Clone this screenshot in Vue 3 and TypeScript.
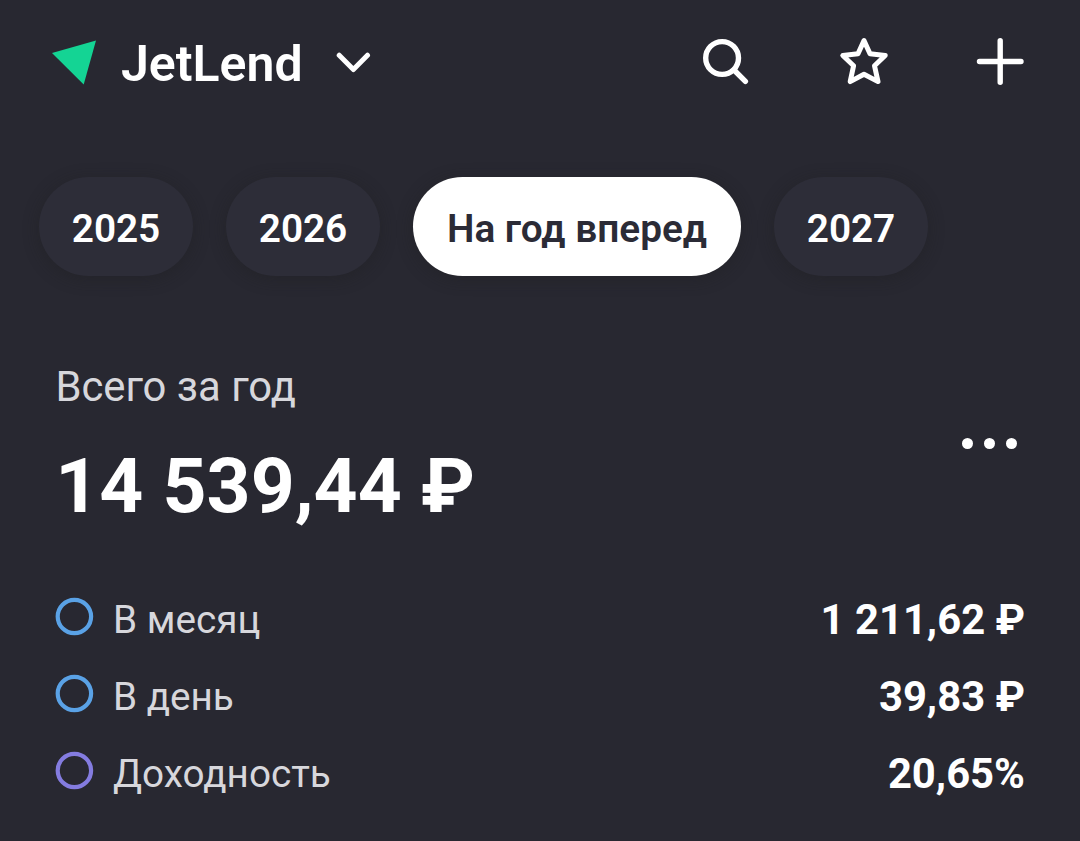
<script setup lang="ts">
interface Period {
  label: string
  active?: boolean
}

interface Metric {
  label: string
  value: string
  tone: 'blue' | 'violet'
}

const periods: Period[] = [
  { label: '2025' },
  { label: '2026' },
  { label: 'На год вперед', active: true },
  { label: '2027' },
]

const metrics: Metric[] = [
  { label: 'В месяц', value: '1 211,62 ₽', tone: 'blue' },
  { label: 'В день', value: '39,83 ₽', tone: 'blue' },
  { label: 'Доходность', value: '20,65%', tone: 'violet' },
]
</script>

<template>
  <main class="screen">
    <header class="topbar">
      <svg class="logo" viewBox="0 0 46 46"><path d="M2 14 46 1.5 33.7 45.5Z" /></svg>
      <h1 class="title">JetLend</h1>
      <svg class="icon chevron" viewBox="0 0 36 24"><path d="M4.2 5.2 18.4 19.5 32.5 5.2" /></svg>
      <nav class="actions">
        <svg class="icon" viewBox="0 0 50 50"><circle cx="22.1" cy="22" r="16.4" /><path d="M34 34 45.4 45.4" /></svg>
        <svg class="icon star" viewBox="0 0 50 50">
          <path d="M25 4.6 31 17.7 46.2 19.5 35.5 29.7 39 45.6 25 38.3 11.2 45.6 14.6 29.7 3.8 19.5 19 17.7Z" />
        </svg>
        <svg class="icon" viewBox="0 0 50 50"><path d="M25.2 4.7V46.3M4.5 25.5H46" /></svg>
      </nav>
    </header>

    <div class="periods">
      <button v-for="p in periods" :key="p.label" class="chip" :class="{ active: p.active }">
        <span>{{ p.label }}</span>
      </button>
    </div>

    <section class="summary">
      <div>
        <div class="caption">Всего за год</div>
        <div class="total">14 539,44 ₽</div>
      </div>
      <div class="more"><i /><i /><i /></div>
    </section>

    <ul class="metrics">
      <li v-for="m in metrics" :key="m.label" class="metric">
        <svg class="ring" :class="m.tone" viewBox="0 0 38 37"><circle cx="19.4" cy="18.5" r="16.7" /></svg>
        <span class="name">{{ m.label }}</span>
        <span class="value">{{ m.value }}</span>
      </li>
    </ul>
  </main>
</template>

<style>
body {
  margin: 0;
  background: #282831;
}
</style>

<style scoped>
.screen {
  box-sizing: border-box;
  width: 1080px;
  height: 841px;
  overflow: hidden;
  background: #282831;
  color: #fff;
  font-family: Roboto, "Noto Sans", sans-serif;
}
.topbar {
  display: flex;
  align-items: flex-start;
  height: 141px;
  padding: 36px 55px 0 50px;
}
.logo {
  width: 46px;
  height: 46px;
  margin-top: 3px;
  fill: #14d494;
}
.title {
  width: 182px;
  margin: 0 0 0 25px;
  font-size: 50px;
  line-height: 56px;
  font-weight: 600;
  white-space: nowrap;
}
.icon {
  width: 50px;
  height: 50px;
  fill: none;
  stroke: #fff;
  stroke-width: 5.4;
  stroke-linecap: round;
  stroke-linejoin: round;
}
.icon.chevron {
  width: 36px;
  height: 24px;
  margin: 14px 0 0 32px;
  stroke-width: 5;
}
.icon.star {
  stroke-width: 5;
}
.actions {
  display: flex;
  gap: 89px;
  margin-left: auto;
}
.actions .icon:nth-child(3) {
  margin-left: -3px;
}
.periods {
  display: flex;
  gap: 33px;
  padding-left: 39px;
}
.chip {
  box-sizing: border-box;
  flex: none;
  width: 154px;
  height: 99px;
  padding: 4px 0 0;
  border: 0;
  border-radius: 50px;
  background: #2d2d38;
  box-shadow: 0 3px 16px rgba(30, 30, 34, 0.45);
  color: #fff;
  font: 600 38.8px/46px Roboto, "Noto Sans", sans-serif;
  letter-spacing: -0.1px;
  white-space: nowrap;
}
.chip.active {
  width: 328px;
  background: #fff;
  color: #2b2b36;
  letter-spacing: 0;
}
.summary {
  display: flex;
  justify-content: space-between;
  padding: 86px 63px 0 55px;
}
.caption {
  height: 50px;
  margin-left: 0.4px;
  font-size: 41.8px;
  line-height: 50px;
  color: #d7d7dc;
}
.total {
  margin-top: 28px;
  margin-left: 0.3px;
  font-size: 76.8px;
  line-height: 92px;
  font-weight: 700;
}
.more {
  display: flex;
  gap: 11px;
  padding-top: 76px;
}
.more i {
  width: 11px;
  height: 11px;
  border-radius: 50%;
  background: #fff;
}
.metrics {
  margin: 49px 0 0;
  padding: 0 55px;
  list-style: none;
}
.metric {
  display: flex;
  align-items: center;
  height: 77px;
}
.ring {
  width: 38px;
  height: 37px;
  margin-bottom: 6px;
  overflow: visible;
  fill: none;
  stroke: #5aa2e6;
  stroke-width: 4.2;
}
.ring.violet {
  stroke: #847ce0;
}
.name {
  margin-left: 20px;
  font-size: 38.7px;
  line-height: 46px;
  color: #d7d7dc;
}
.value {
  margin-left: auto;
  font-size: 41.8px;
  line-height: 50px;
  font-weight: 700;
}
</style>
